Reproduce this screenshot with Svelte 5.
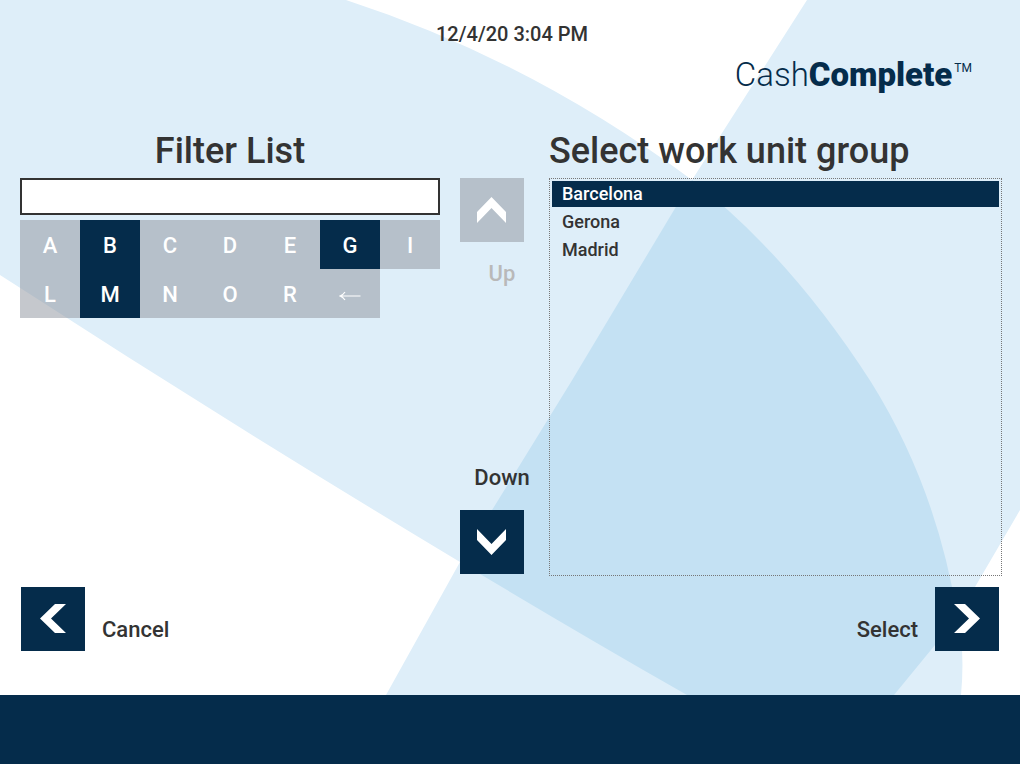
<script>
  let filter = $state('');
  let selected = $state('Barcelona');

  const groups = ['Barcelona', 'Gerona', 'Madrid'];
  const letters = ['A', 'B', 'C', 'D', 'E', 'G', 'I', 'L', 'M', 'N', 'O', 'R'];

  let visible = $derived(
    groups.filter((group) => group.toUpperCase().startsWith(filter.toUpperCase()))
  );

  // a key is enabled only if some group continues the filter with that letter
  const isEnabled = (letter) =>
    groups.some((group) => group.toUpperCase().startsWith(filter.toUpperCase() + letter));

  const addLetter = (letter) => {
    filter += letter;
  };

  const removeLetter = () => {
    filter = filter.slice(0, -1);
  };

  const move = (step) => {
    const next = visible[visible.indexOf(selected) + step];
    if (next) selected = next;
  };
</script>

{#snippet chevron(turn)}
  <svg class="chevron {turn}" viewBox="0 0 64 64" aria-hidden="true">
    <path d="M19 31.5 L34 17 H45 L30 31.5 L45 46 H34 Z" />
  </svg>
{/snippet}

<div class="screen">
  <svg class="backdrop" viewBox="0 0 1020 764" preserveAspectRatio="none" aria-hidden="true">
    <path fill="#deeef9" d="M0 0 H346 Q530 60 692 180 L807 0 H1020 V510 L975 587 L958 614 Q965 654 961 695 V764 H345 L386 695 L460 562 Q230 424 0 275 Z" />
    <path fill="#c4e1f3" d="M692 180 Q790 256 871 382 Q936 486 957 614 L935 645 L894 695 H687 Q580 634 460 562 L571 382 Z" />
  </svg>

  <header>
    <time datetime="2020-12-04T15:04">12/4/20 3:04 PM</time>
    <div class="logo">Cash<b>Complete</b><sup>TM</sup></div>
  </header>

  <main>
    <section class="filter">
      <h2><label for="filter">Filter List</label></h2>
      <input id="filter" type="text" autocomplete="off" bind:value={filter} />
      <div class="keys">
        {#each letters as letter}
          <button disabled={!isEnabled(letter)} onclick={() => addLetter(letter)}>{letter}</button>
        {/each}
        <button aria-label="Backspace" disabled={!filter} onclick={removeLetter}>
          <svg class="back" viewBox="0 0 22 12" aria-hidden="true">
            <path d="M21.5 6 H1 M6 2 Q4 5 1 6 Q4 7 6 10" />
          </svg>
        </button>
      </div>
    </section>

    <div class="scroll">
      <div class="scroll-item">
        <button id="up" class="square" disabled={visible.indexOf(selected) <= 0} onclick={() => move(-1)}>
          {@render chevron('up')}
        </button>
        <label class="off" for="up">Up</label>
      </div>
      <div class="scroll-item">
        <label for="down">Down</label>
        <button id="down" class="square" onclick={() => move(1)}>{@render chevron('down')}</button>
      </div>
    </div>

    <section class="groups">
      <h2>Select work unit group</h2>
      <ul>
        {#each visible as group}
          <li>
            <button class:selected={group === selected} onclick={() => (selected = group)}>{group}</button>
          </li>
        {/each}
      </ul>
    </section>
  </main>

  <nav>
    <div class="action">
      <button id="cancel" class="square">{@render chevron('left')}</button>
      <label for="cancel">Cancel</label>
    </div>
    <div class="action">
      <label for="select">Select</label>
      <button id="select" class="square">{@render chevron('right')}</button>
    </div>
  </nav>

  <footer></footer>
</div>

<style>
  :global(body) {
    margin: 0;
    background: #fff;
  }

  .screen {
    position: relative;
    z-index: 0;
    display: flex;
    flex-direction: column;
    min-height: 100vh;
    font-family: Roboto, 'Liberation Sans', sans-serif;
    font-weight: 500;
    color: #333;
  }

  .backdrop {
    position: absolute;
    inset: 0;
    z-index: -1;
    width: 100%;
    height: 100%;
  }

  button {
    padding: 0;
    border: none;
    font: inherit;
    color: white;
    background: #052c4b;
    cursor: pointer;
  }

  button:disabled {
    background: rgba(150, 155, 164, 0.55);
    cursor: default;
  }

  header {
    display: flex;
    flex-direction: column;
    padding: 22px 48px 0;
  }

  time {
    align-self: center;
    padding-left: 4px;
    font-size: 20px;
    line-height: 24px;
  }

  .logo {
    align-self: flex-end;
    margin-top: 8px;
    font-size: 33px;
    line-height: 42px;
    font-weight: 300;
    color: #052c4b;
  }

  .logo b {
    font-weight: 900;
  }

  .logo sup {
    margin-left: 2px;
    font-size: 12px;
    font-weight: 400;
    line-height: 0;
    vertical-align: 14px;
  }

  main {
    flex: 1;
    display: grid;
    grid-template-columns: 440fr 84px 458fr;
    padding: 34px 18px 0 20px;
  }

  h2 {
    margin: 0 0 6px;
    font-size: 36px;
    line-height: 42px;
    font-weight: 500;
  }

  .filter {
    margin-right: 20px;
  }

  .filter h2 {
    text-align: center;
  }

  input {
    box-sizing: border-box;
    display: block;
    width: 100%;
    height: 37px;
    padding: 0 8px;
    border: 2px solid #333;
    border-radius: 0;
    outline: none;
    font: inherit;
    font-size: 22px;
    color: inherit;
    background: white;
  }

  .keys {
    display: grid;
    grid-template-columns: repeat(7, 1fr);
    margin-top: 5px;
  }

  .keys button {
    height: 49px;
    padding-top: 2px;
    font-size: 22px;
    line-height: 26px;
  }

  .back {
    width: 22px;
    height: 12px;
    fill: none;
    stroke: white;
    stroke-width: 1.2;
  }

  .scroll {
    display: flex;
    flex-direction: column;
    justify-content: space-between;
    padding: 48px 0 2px;
  }

  .scroll-item {
    display: flex;
    flex-direction: column;
    gap: 18px;
  }

  .scroll-item label {
    text-align: center;
  }

  .scroll-item label,
  .action label {
    font-size: 22px;
    line-height: 28px;
  }

  label.off {
    color: #b9b9b9;
  }

  .square {
    flex: none;
    width: 64px;
    height: 64px;
  }

  .chevron {
    display: block;
    width: 64px;
    height: 64px;
    fill: white;
  }

  .chevron.up {
    transform: rotate(90deg) scaleY(-1);
  }

  .chevron.down {
    transform: rotate(-90deg);
  }

  .chevron.right {
    transform: scaleX(-1);
  }

  .groups {
    display: flex;
    flex-direction: column;
    margin-left: 5px;
  }

  ul {
    flex: 1;
    display: flex;
    flex-direction: column;
    gap: 2px;
    margin: 0;
    padding: 2px;
    border: 1px dotted #777;
    list-style: none;
  }

  ul button {
    width: 100%;
    height: 26px;
    padding: 0 10px;
    font-size: 18px;
    line-height: 26px;
    text-align: left;
    color: #333;
    background: none;
  }

  li {
    height: 26px;
  }

  ul button.selected {
    color: white;
    background: #052c4b;
  }

  nav {
    display: flex;
    justify-content: space-between;
    padding: 11px 21px 44px;
  }

  .action {
    display: flex;
    align-items: center;
    gap: 17px;
  }

  .action label {
    padding-top: 22px;
  }

  footer {
    height: 69px;
    background: #052c4b;
  }
</style>
